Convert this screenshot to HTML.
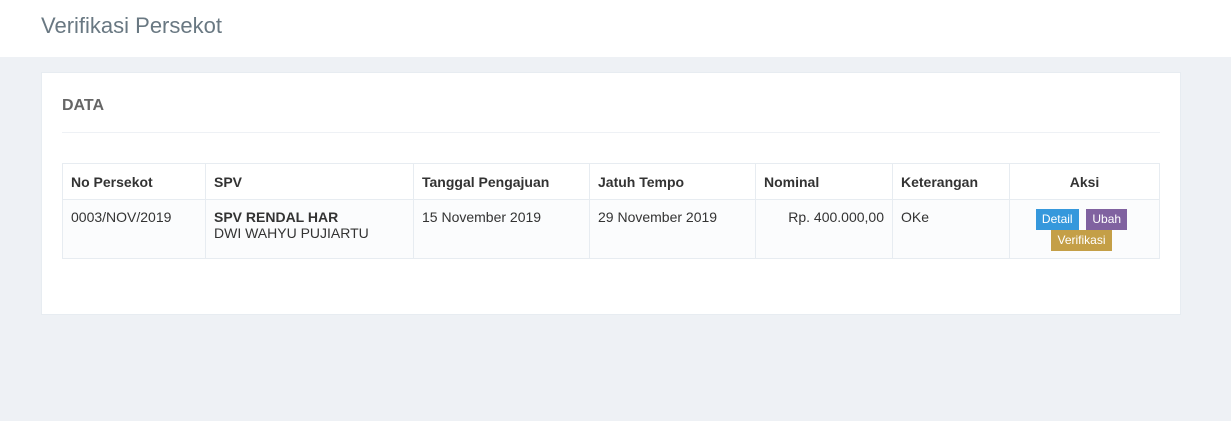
<!DOCTYPE html>
<html><head><style>
body{margin:0;width:1231px;height:421px;background:#eef1f5;font-family:"Liberation Sans",sans-serif;overflow:hidden;position:relative}
.hdr{position:absolute;left:0;top:0;width:1231px;height:57px;background:#fff}
.hdr h1{position:absolute;left:41px;top:13px;margin:0;font-weight:normal;font-size:22px;color:#697882}
.card{position:absolute;left:41px;top:72px;width:1138px;height:241px;background:#fff;border:1px solid #e7ecf1}
.t{position:absolute;left:20px;top:24px;font-size:16px;font-weight:bold;color:#666}
.ln{position:absolute;left:20px;top:59px;width:1098px;height:1px;background:#eef1f5}
table{position:absolute;left:20px;top:90px;width:1098px;border-collapse:collapse;table-layout:fixed;font-size:14px;color:#333}
td,th{border:1px solid #e7ecf1;padding:0 8px;vertical-align:top;text-align:left;white-space:nowrap}
th{height:35px;vertical-align:middle;font-weight:bold}
tbody td{height:59px;padding-top:9px;box-sizing:border-box;background:#fbfcfd}
.b{display:inline-block;color:#fff;font-size:12px;padding:3px 6px;line-height:15px}
</style></head><body>
<div class="hdr"><h1>Verifikasi Persekot</h1></div>
<div class="card"><div class="t">DATA</div><div class="ln"></div>
<table><colgroup><col style="width:143px"><col style="width:208px"><col style="width:176px"><col style="width:166px"><col style="width:137px"><col style="width:117px"><col style="width:150px"></colgroup>
<thead><tr>
<th>No Persekot</th><th>SPV</th><th>Tanggal Pengajuan</th><th>Jatuh Tempo</th><th>Nominal</th><th>Keterangan</th><th style="text-align:center">Aksi</th>
</tr></thead><tbody><tr>
<td>0003/NOV/2019</td><td><b>SPV RENDAL HAR</b><br>DWI WAHYU PUJIARTU</td><td>15 November 2019</td><td>29 November 2019</td><td style="text-align:right">Rp. 400.000,00</td><td>OKe</td>
<td style="text-align:center;padding:9px 11px 0 5px;line-height:0"><span class="b" style="background:#3598dc">Detail</span>&nbsp;&nbsp;<span class="b" style="background:#8062a0">Ubah</span><br><span class="b" style="background:#c49f47;margin-top:0">Verifikasi</span></td>
</tr></tbody></table></div>
</body></html>
